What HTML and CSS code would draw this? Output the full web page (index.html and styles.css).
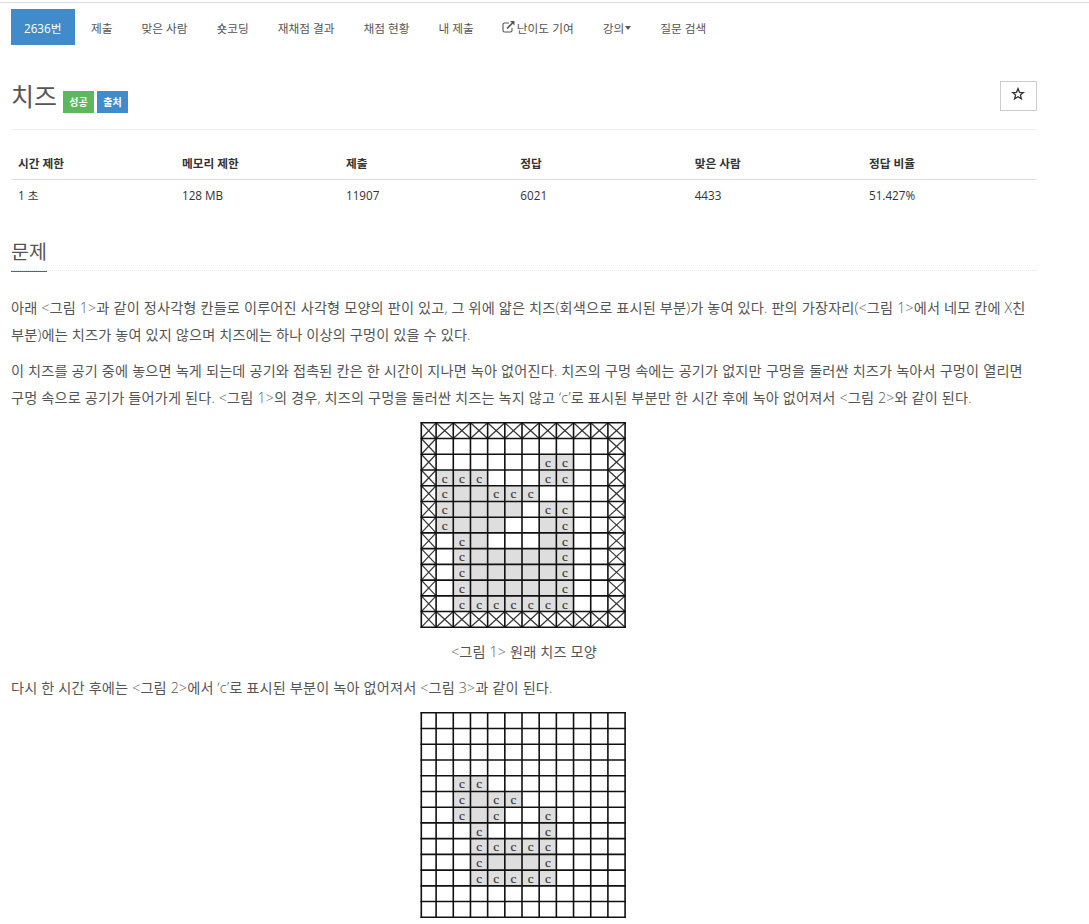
FILE: index.html
```html
<!DOCTYPE html>
<html lang="ko">
<head>
    <meta charset="UTF-8">
    <meta name="viewport" content="width=device-width, initial-scale=1.0">
    <title>2636번: 치즈</title>
    <link rel="stylesheet" href="styles.css">
</head>
<body>
    <div class="container">
        <ul class="problem-menu">
            <li class="active"><a>2636번</a></li>
            <li><a>제출</a></li>
            <li><a>맞은 사람</a></li>
            <li><a>숏코딩</a></li>
            <li><a>재채점 결과</a></li>
            <li><a>채점 현황</a></li>
            <li><a>내 제출</a></li>
            <li><a><svg class="icon-link" viewBox="0 0 13 12"><path d="M7 2H2.5Q1 2 1 3.5V9.500Q1 11 2.500 11H8.500Q10 11 10 9.500V7" fill="none" stroke="#555" stroke-width="1.100"/><path d="M5 7.500L10.500 2" stroke="#555" stroke-width="1.700"/><path d="M8 0H12.500V4.500Z" fill="#555"/></svg>난이도 기여</a></li>
            <li><a>강의<span class="caret"></span></a></li>
            <li><a>질문 검색</a></li>
        </ul>

        <div class="page-header">
            <h1>치즈</h1>
            <span class="label label-success">성공</span>
            <span class="label label-source">출처</span>
            <button class="favorite"><svg viewBox="0 0 14 14"><path d="M7 1.600L8.500 5.300L12.300 5.500L9.400 8L10.400 11.900L7 9.700L3.600 11.900L4.600 8L1.700 5.500L5.500 5.300Z" fill="none" stroke="#333" stroke-width="1.300"/></svg></button>
        </div>

        <table class="problem-info">
            <thead>
                <tr>
                    <th class="narrow">시간 제한</th>
                    <th class="narrow">메모리 제한</th>
                    <th>제출</th>
                    <th>정답</th>
                    <th>맞은 사람</th>
                    <th class="last">정답 비율</th>
                </tr>
            </thead>
            <tbody>
                <tr>
                    <td>1 초</td>
                    <td>128 MB</td>
                    <td>11907</td>
                    <td>6021</td>
                    <td>4433</td>
                    <td>51.427%</td>
                </tr>
            </tbody>
        </table>

        <div class="headline">
            <h2>문제</h2>
        </div>

        <div class="problem-text">
            <p>아래 &lt;그림 1&gt;과 같이 정사각형 칸들로 이루어진 사각형 모양의 판이 있고, 그 위에 얇은 치즈(회색으로 표시된 부분)가 놓여 있다. 판의 가장자리(&lt;그림 1&gt;에서 네모 칸에 X친<br>부분)에는 치즈가 놓여 있지 않으며 치즈에는 하나 이상의 구멍이 있을 수 있다.</p>
            <p>이 치즈를 공기 중에 놓으면 녹게 되는데 공기와 접촉된 칸은 한 시간이 지나면 녹아 없어진다. 치즈의 구멍 속에는 공기가 없지만 구멍을 둘러싼 치즈가 녹아서 구멍이 열리면<br>구멍 속으로 공기가 들어가게 된다. &lt;그림 1&gt;의 경우, 치즈의 구멍을 둘러싼 치즈는 녹지 않고 ‘c’로 표시된 부분만 한 시간 후에 녹아 없어져서 &lt;그림 2&gt;와 같이 된다.</p>
            <svg class="cheese" id="cheese1" width="208" height="208"></svg>
            <p class="caption">&lt;그림 1&gt; 원래 치즈 모양</p>
            <p>다시 한 시간 후에는 &lt;그림 2&gt;에서 ‘c’로 표시된 부분이 녹아 없어져서 &lt;그림 3&gt;과 같이 된다.</p>
            <svg class="cheese" id="cheese2" width="208" height="208"></svg>
        </div>
    </div>
    <script src="cheese.js"></script>
</body>
</html>
```
FILE: styles.css
```css
body, html {
    margin: 0;
    padding: 0;
}
body {
    box-sizing: border-box;
    height: 922px;
    margin-top: 2px;
    overflow: hidden;
    border-top: 1px solid #ddd;
    background-color: #fff;
    color: #333;
    font-family: "Open Sans", "Noto Sans CJK KR", sans-serif;
    font-size: 12px;
}
.container {
    width: 1026px;
    margin-left: 11px;
}
.problem-menu {
    display: flex;
    gap: 3px;
    list-style: none;
    margin: 0;
    padding: 6px 0 0;
    font-size: 11.7px;
}
.problem-menu a {
    display: flex;
    align-items: center;
    height: 36px;
    padding: 0 13px;
    color: #555;
    white-space: nowrap;
}
.problem-menu .active a {
    padding-right: 13.4px;
    background-color: #428bca;
    color: #fff;
}
.icon-link {
    width: 13px;
    height: 12px;
    margin: 0 1.5px 0 -0.5px;
}
.caret {
    border-top: 4px solid #555;
    border-left: 3.5px solid transparent;
    border-right: 3.5px solid transparent;
    margin: 2px 0 0 1px;
}
.page-header {
    display: flex;
    align-items: flex-start;
    height: 48px;
    padding-top: 36px;
    border-bottom: 1px solid #eee;
}
.page-header h1 {
    margin: -3px 6px 0 0;
    color: #555;
    font-size: 25px;
    line-height: 36px;
    font-weight: normal;
}
.label {
    margin: 10px 3px 0 0;
    width: 31px;
    height: 22px;
    line-height: 22px;
    text-align: center;
    color: #fff;
    font-size: 10px;
    font-weight: bold;
}
.label-success {
    background-color: #5cb85c;
}
.label-source {
    background-color: #428bca;
}
.favorite {
    display: flex;
    align-items: center;
    justify-content: center;
    box-sizing: border-box;
    width: 37px;
    height: 30px;
    margin-left: auto;
    padding: 0 1px 4px 0;
    border: 1px solid #ccc;
    background-color: #fff;
}
.favorite svg {
    width: 14px;
    height: 14px;
}
.problem-info {
    width: 100%;
    margin-top: 18px;
    table-layout: fixed;
    border-collapse: collapse;
}
.problem-info th,
.problem-info td {
    height: 31px;
    padding: 0 7px;
    text-align: left;
    font-size: 11.7px;
    line-height: 17px;
}
.problem-info th {
    border-bottom: 1px solid #ddd;
}
.problem-info .narrow {
    width: 150px;
}
.problem-info .last {
    width: 161px;
}
.headline {
    margin-top: 24px;
    height: 35px;
    border-bottom: 1px dotted #e4e9f0;
}
.headline h2 {
    display: inline-block;
    height: 36px;
    margin: 0;
    border-bottom: 1px solid #2175a8;
    color: #555;
    font-size: 19.5px;
    line-height: 33px;
    font-weight: normal;
}
.problem-text {
    margin-top: 24px;
    color: #555;
    font-family: "Open Sans Light", "Noto Sans CJK KR", sans-serif;
    font-size: 14.2px;
    line-height: 26.6px;
    letter-spacing: 0.165px;
}
.problem-text p {
    margin: 0 0 10px;
    white-space: nowrap;
}
.problem-text .caption {
    margin-top: 9.5px;
    text-align: center;
}
.cheese {
    display: block;
    position: relative;
    top: -0.5px;
    margin: 0 auto;
}
#cheese2 {
    margin-top: -0.5px;
}
.cheese-cell {
    fill: #dedede;
}
.cheese-line {
    stroke: #111;
    stroke-width: 1.6;
}
.cheese-cross {
    stroke: #333;
    stroke-width: 1.2;
}
.cheese-letter {
    fill: #333;
    font-family: "Liberation Serif", serif;
    font-size: 13px;
    letter-spacing: 0;
    stroke: #333;
    stroke-width: 0.2;
    text-anchor: middle;
}
```
FILE: cheese.js
```js
// X: 가장자리, c: 녹는 치즈, g: 치즈, .: 공기
var cheese1 = [
    "XXXXXXXXXXXX",
    "X..........X",
    "X......cc..X",
    "Xccc...cc..X",
    "Xcggccc....X",
    "Xcgggg.cc..X",
    "Xcggg..gc..X",
    "X.cg...gc..X",
    "X.cgggggc..X",
    "X.cgggggc..X",
    "X.cgggggc..X",
    "X.ccccccc..X",
    "XXXXXXXXXXXX"
];
var cheese2 = [
    "............",
    "............",
    "............",
    "............",
    "..cc........",
    "..cgcc......",
    "..cgc..c....",
    "...c...c....",
    "...ccccc....",
    "...cgggc....",
    "...ccccc....",
    "............",
    "............"
];

function lineX(col) {
    return col == 0 ? 1.3 : 16.1 + (col - 1) * 17.18;
}

function lineY(row) {
    return 1.8 + row * 15.73;
}

function line(x1, y1, x2, y2, name) {
    return `<line x1="${x1}" y1="${y1}" x2="${x2}" y2="${y2}" class="${name}"/>`;
}

function draw(id, board) {
    var cells = "", lines = "";
    for (var r = 0; r < 13; r++) {
        for (var c = 0; c < 12; c++) {
            var x = lineX(c), y = lineY(r), x2 = lineX(c + 1), y2 = lineY(r + 1);
            var cell = board[r][c];
            if (cell == "X") {
                lines += line(x, y, x2, y2, "cheese-cross") + line(x2, y, x, y2, "cheese-cross");
            } else if (cell != ".") {
                cells += `<rect x="${x}" y="${y}" width="${x2 - x}" height="${y2 - y}" class="cheese-cell"/>`;
            }
            if (cell == "c") {
                lines += `<text x="${(x + x2) / 2}" y="${y + 12.7}" class="cheese-letter">c</text>`;
            }
        }
    }
    for (var i = 0; i <= 12; i++) {
        lines += line(lineX(i), 1, lineX(i), 207, "cheese-line");
    }
    for (var j = 0; j <= 13; j++) {
        lines += line(0.5, lineY(j), 205.9, lineY(j), "cheese-line");
    }
    document.getElementById(id).innerHTML = cells + lines;
}

draw("cheese1", cheese1);
draw("cheese2", cheese2);
```
